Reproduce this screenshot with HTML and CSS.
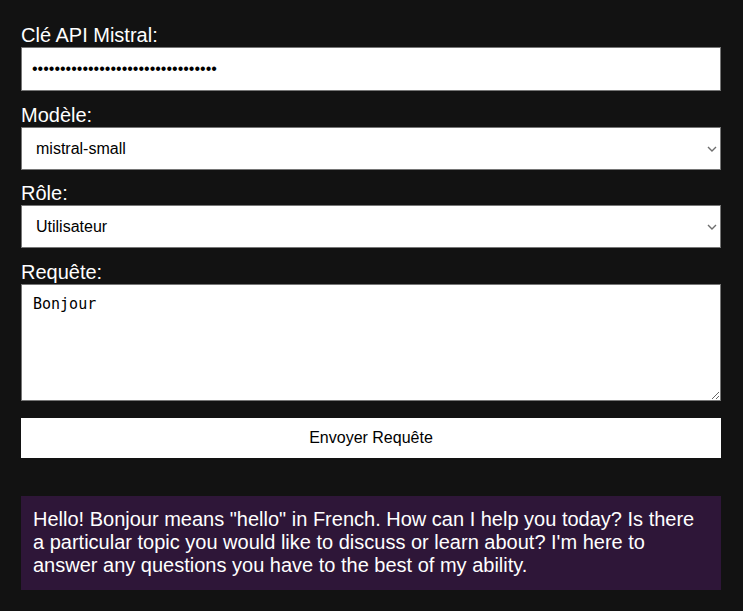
FILE: index.html
```html
<!DOCTYPE html>
<html lang="fr">
<head>
<meta charset="utf-8">
<title>Mistral</title>
<link rel="stylesheet" href="styles.css">
</head>
<body>
<main class="app">
  <form class="form">
    <label class="label" for="key">Clé API Mistral:</label>
    <input class="field field-input" id="key" type="password" value="xxxxxxxxxxxxxxxxxxxxxxxxxxxxxxxxx">
    <label class="label gap" for="model">Modèle:</label>
    <div class="select-wrap">
      <select class="field field-select" id="model">
        <option>mistral-small</option>
      </select>
      <svg class="chevron" width="10" height="6" viewBox="0 0 10 6"><path d="M1 1 L5 5 L9 1" fill="none" stroke="#6e6e6e" stroke-width="1.4"/></svg>
    </div>
    <label class="label gap-sm" for="role">Rôle:</label>
    <div class="select-wrap">
      <select class="field field-select" id="role">
        <option>Utilisateur</option>
      </select>
      <svg class="chevron" width="10" height="6" viewBox="0 0 10 6"><path d="M1 1 L5 5 L9 1" fill="none" stroke="#6e6e6e" stroke-width="1.4"/></svg>
    </div>
    <label class="label gap" for="query">Requête:</label>
    <textarea class="field field-area" id="query">Bonjour</textarea>
    <button class="send" type="button">Envoyer Requête</button>
  </form>
  <div class="response">Hello! Bonjour means "hello" in French. How can I help you today? Is there a particular topic you would like to discuss or learn about? I'm here to answer any questions you have to the best of my ability.</div>
</main>
</body>
</html>
```

FILE: styles.css
```css
html, body {
  margin: 0;
  padding: 0;
  background: #121212;
}
body {
  font-family: "Liberation Sans", Arial, sans-serif;
  color: #ffffff;
}
.app {
  width: 700px;
  padding: 24px 0 0 21px;
}
.form {
  display: flex;
  flex-direction: column;
}
.label {
  display: block;
  font-size: 20px;
  line-height: 23px;
  color: #ffffff;
}
.gap { margin-top: 13px; }
.gap-sm { margin-top: 12px; }
.field {
  box-sizing: border-box;
  width: 700px;
  margin: 0;
  background: #ffffff;
  color: #000000;
  border: 1px solid #767676;
  border-radius: 0;
  font-family: "Liberation Sans", Arial, sans-serif;
  font-size: 16px;
}
.field-input {
  height: 44px;
  padding: 0 10px;
}
.select-wrap {
  position: relative;
  width: 700px;
  height: 43px;
}
.field-select {
  -webkit-appearance: none;
  appearance: none;
  display: block;
  height: 43px;
  padding: 0 30px 0 14px;
  outline: none;
}
.chevron {
  position: absolute;
  right: 4px;
  top: 19px;
  pointer-events: none;
}
.field-area {
  height: 117px;
  padding: 10px 11px;
  font-family: "DejaVu Sans Mono", "Liberation Mono", monospace;
  font-size: 15px;
  line-height: 18px;
  resize: both;
}
.send {
  margin-top: 17px;
  height: 40px;
  width: 700px;
  background: #ffffff;
  color: #000000;
  border: none;
  border-radius: 0;
  font-family: "Liberation Sans", Arial, sans-serif;
  font-size: 16px;
  padding: 0;
}
.response {
  box-sizing: border-box;
  margin-top: 38px;
  width: 700px;
  background: #2e1638;
  padding: 12px 12px 13px 12px;
  font-size: 20px;
  line-height: 23px;
  color: #ffffff;
}
```
